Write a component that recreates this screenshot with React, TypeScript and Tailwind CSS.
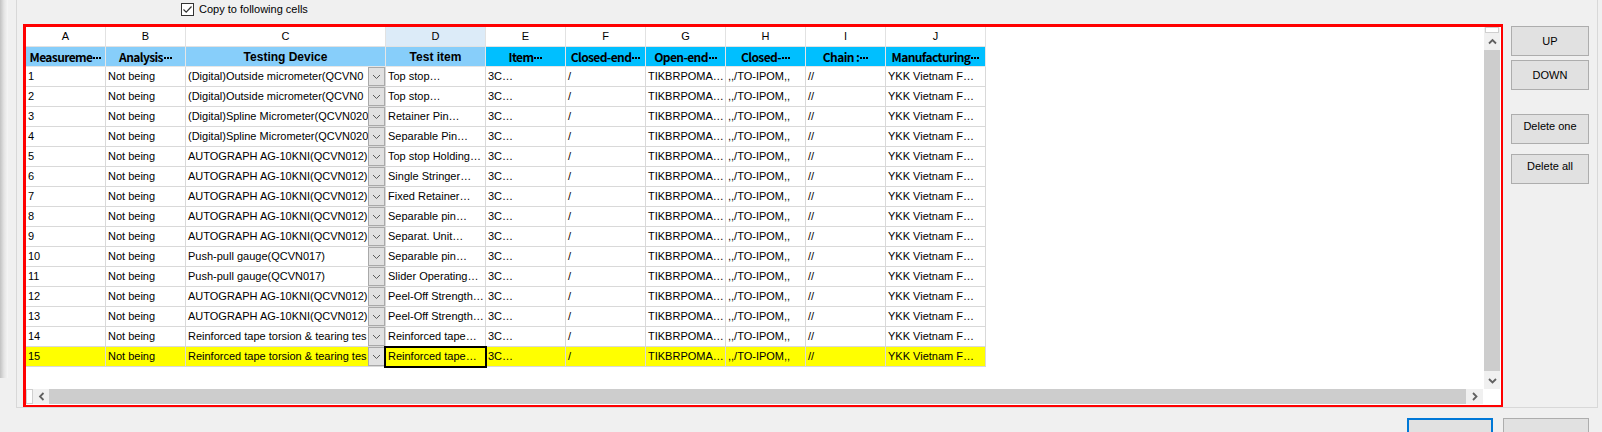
import React from "react";

const W = ["w-[80px]", "w-[80px]", "w-[200px]", "w-[100px]", "w-[80px]", "w-[80px]", "w-[80px]", "w-[80px]", "w-[80px]", "w-[100px]"];
const letters = ["A", "B", "C", "D", "E", "F", "G", "H", "I", "J"];
const heads = ["Measureme", "Analysis", "Testing Device", "Test item", "Item", "Closed-end", "Open-end", "Closed-", "Chain :", "Manufacturing"];

const devices = [
  "(Digital)Outside micrometer(QCVN0",
  "(Digital)Outside micrometer(QCVN0",
  "(Digital)Spline Micrometer(QCVN020",
  "(Digital)Spline Micrometer(QCVN020",
  "AUTOGRAPH AG-10KNI(QCVN012)",
  "AUTOGRAPH AG-10KNI(QCVN012)",
  "AUTOGRAPH AG-10KNI(QCVN012)",
  "AUTOGRAPH AG-10KNI(QCVN012)",
  "AUTOGRAPH AG-10KNI(QCVN012)",
  "Push-pull gauge(QCVN017)",
  "Push-pull gauge(QCVN017)",
  "AUTOGRAPH AG-10KNI(QCVN012)",
  "AUTOGRAPH AG-10KNI(QCVN012)",
  "Reinforced tape torsion & tearing tes",
  "Reinforced tape torsion & tearing tes",
];
const items = [
  "Top stop…",
  "Top stop…",
  "Retainer Pin…",
  "Separable Pin…",
  "Top stop Holding…",
  "Single Stringer…",
  "Fixed Retainer…",
  "Separable pin…",
  "Separat. Unit…",
  "Separable pin…",
  "Slider Operating…",
  "Peel-Off  Strength…",
  "Peel-Off  Strength…",
  "Reinforced  tape…",
  "Reinforced  tape…",
];

const sans = { fontFamily: '"Liberation Sans", Arial, sans-serif' };
const cjk = { fontFamily: '"Noto Sans CJK JP", "Liberation Sans", sans-serif' };

function Chevron({ dir }: { dir: "up" | "down" | "left" | "right" }) {
  const pts =
    dir === "up" ? "4,9.5 7.5,6 11,9.5" : dir === "down" ? "4,6 7.5,9.5 11,6" : dir === "left" ? "9.5,4 6,7.5 9.5,11" : "6,4 9.5,7.5 6,11";
  return (
    <svg width="15" height="15" viewBox="0 0 15 15">
      <polyline points={pts} fill="none" stroke="#606060" strokeWidth="1.8" />
    </svg>
  );
}

function Dots() {
  return (
    <span className="inline-flex items-center gap-[1px] ml-[1px] translate-y-[1px]">
      <span className="w-[2px] h-[2px] bg-black" />
      <span className="w-[2px] h-[2px] bg-black" />
      <span className="w-[2px] h-[2px] bg-black" />
    </span>
  );
}

function DropBtn() {
  return (
    <div className="w-[17px] h-[19px] shrink-0 border border-[#a9a9a9] bg-[#e1e1e1] flex items-center justify-center">
      <svg width="9" height="6" viewBox="0 0 9 6">
        <polyline points="1,1 4.5,4.5 8,1" fill="none" stroke="#5a5a5a" strokeWidth="1" />
      </svg>
    </div>
  );
}

function DataRow({ n }: { n: number }) {
  const hl = n === 15;
  const bg = hl ? "bg-[#ffff00]" : "bg-white";
  const cell = `h-[20px] border-r border-b border-[#d9d9d9] flex items-center overflow-hidden whitespace-nowrap text-[11px] text-black ${bg}`;
  const vals = [String(n), "Not being", devices[n - 1], items[n - 1], "3C…", "/", "TIKBRPOMA…", ",,/TO-IPOM,,", "//", "YKK Vietnam F…"];
  return (
    <div className="flex" style={sans}>
      {vals.map((v, i) => {
        if (i === 2) {
          return (
            <div key={i} className={`${W[i]} ${cell}`}>
              <div className="flex-1 overflow-hidden pl-[2px]">{v}</div>
              <DropBtn />
            </div>
          );
        }
        if (i === 3 && hl) {
          return (
            <div key={i} className={`${W[i]} ${cell} relative !overflow-visible`}>
              <div className="overflow-hidden pl-[2px]">{v}</div>
              <div className="absolute left-[-2px] top-[-1px] w-[103px] h-[22px] border-2 border-black" />
            </div>
          );
        }
        return (
          <div key={i} className={`${W[i]} ${cell} pl-[2px]`}>
            {v}
          </div>
        );
      })}
    </div>
  );
}

function SideBtn({ label, top }: { label: string; top?: boolean }) {
  return (
    <div
      className={`w-[78px] h-[30px] border border-[#adadad] bg-[#e1e1e1] flex justify-center text-[11px] text-black ${top ? "items-start pt-[3px]" : "items-center"}`}
      style={sans}
    >
      {label}
    </div>
  );
}

export default function App() {
  const rows = Array.from({ length: 15 }, (_, i) => i + 1);
  return (
    <div className="w-[1602px] h-[432px] overflow-hidden bg-[#f0f0f0] flex" style={sans}>
      <div className="w-[8px] shrink-0">
        <div className="h-[378px] bg-gradient-to-r from-[#c2c2c2] via-[#e4e4e4] to-[#f6f6f6]" />
      </div>
      <div className="w-[8px] shrink-0" />
      <div className="w-[1582px] shrink-0 flex flex-col">
        <div className="h-[414px] border-l border-r border-b border-[#d8d8d8] flex flex-col">
          <div className="h-[24px] pl-[164px] pt-[3px] flex items-start">
            <div className="flex items-center h-[13px] gap-[5px]">
              <div className="w-[13px] h-[13px] border border-[#333333] bg-white flex items-center justify-center">
                <svg width="11" height="11" viewBox="0 0 11 11">
                  <polyline points="1.5,5.5 4.2,8.2 9.5,2.5" fill="none" stroke="#333333" strokeWidth="1.2" />
                </svg>
              </div>
              <span className="text-[11px] text-black leading-[13px]">Copy to following cells</span>
            </div>
          </div>
          <div className="flex">
            <div className="ml-[6px] w-[1480px] h-[383px] border-t-[3px] border-l-[3px] border-r-2 border-b-2 border-[#ff0000] bg-white flex flex-col">
              <div className="h-[362px] flex">
                <div className="w-[1458px] h-[362px] bg-white overflow-hidden">
                  <div className="flex">
                    {letters.map((l, i) => (
                      <div
                        key={l}
                        className={`${W[i]} h-[20px] border-r border-b border-[#e2e2e2] flex items-center justify-center text-[11px] text-black ${i === 3 ? "bg-[#dcebf8]" : "bg-white"}`}
                      >
                        {l}
                      </div>
                    ))}
                  </div>
                  <div className="flex">
                    {heads.map((h, i) => {
                      const big = i === 2 || i === 3;
                      return (
                        <div
                          key={h}
                          className={`${W[i]} h-[20px] border-r border-b border-[#e6e6e6] flex items-center justify-center overflow-hidden whitespace-nowrap text-black font-bold ${i < 4 ? "bg-[#87cefa]" : "bg-[#00bfff]"} ${big ? "text-[12px]" : "text-[12px] tracking-[-0.6px]"}`}
                          style={big ? sans : cjk}
                        >
                          {h}
                          {!big && <Dots />}
                        </div>
                      );
                    })}
                  </div>
                  {rows.map((n) => (
                    <DataRow key={n} n={n} />
                  ))}
                </div>
                <div className="w-[16px] h-[362px] flex flex-col bg-[#f0f0f0]">
                  <div className="h-[6px] mx-[1px] border border-[#cfcfcf] bg-white" />
                  <div className="h-[17px] flex items-center justify-center">
                    <Chevron dir="up" />
                  </div>
                  <div className="flex-1 bg-[#cdcdcd]" />
                  <div className="h-[18px] flex items-center justify-center">
                    <Chevron dir="down" />
                  </div>
                </div>
                <div className="w-[1px] bg-white" />
              </div>
              <div className="h-[15px] flex">
                <div className="w-[7px] border border-[#cfcfcf] bg-white" />
                <div className="w-[16px] bg-[#f0f0f0] flex items-center justify-center">
                  <Chevron dir="left" />
                </div>
                <div className="w-[1417px] bg-[#cdcdcd]" />
                <div className="w-[17px] bg-[#f0f0f0] flex items-center justify-center">
                  <Chevron dir="right" />
                </div>
                <div className="w-[18px] bg-white" />
              </div>
              <div className="h-[1px] bg-white" />
            </div>
            <div className="ml-[8px] pt-[2px] flex flex-col">
              <SideBtn label="UP" />
              <div className="h-[4px]" />
              <SideBtn label="DOWN" />
              <div className="h-[24px]" />
              <SideBtn label="Delete one" top />
              <div className="h-[10px]" />
              <SideBtn label="Delete all" top />
            </div>
          </div>
        </div>
        <div className="pt-[10px] pr-[9px] flex justify-end gap-[10px]">
          <div className="w-[86px] h-[30px] border-2 border-[#0078d7] bg-[#e1e1e1]" />
          <div className="w-[86px] h-[30px] border border-[#adadad] bg-[#e1e1e1]" />
        </div>
      </div>
    </div>
  );
}
